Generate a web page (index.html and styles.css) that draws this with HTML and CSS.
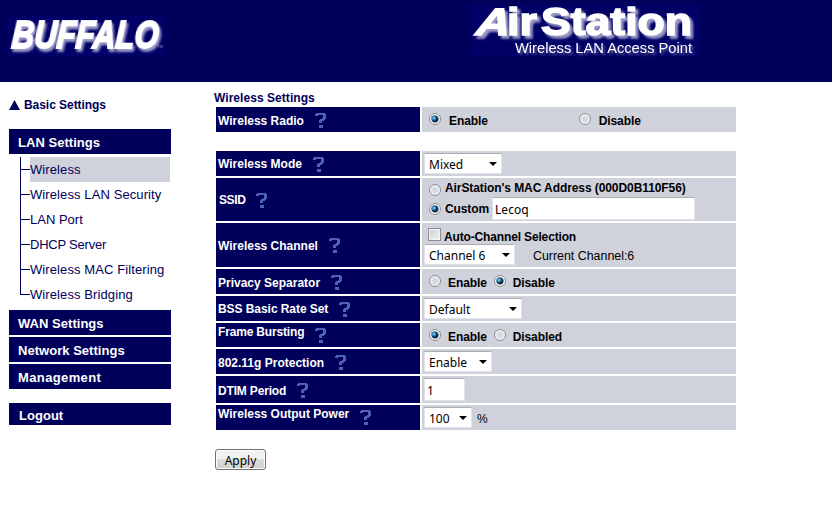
FILE: index.html
```html
<!DOCTYPE html>
<html lang="en">
<head>
<meta charset="utf-8">
<title>AirStation</title>
<link rel="stylesheet" href="styles.css">
</head>
<body>
<svg class="defs" width="0" height="0">
  <symbol id="help" viewBox="0 0 11 15"><path d="M1 0H10V1H11V6H10V7H9V8H7V10H4V7H5V6H7V5H8V2H3V3H0V1H1ZM4 12H8V15H4Z"/></symbol>
</svg>
<header class="header">
  <svg class="brand" width="158" height="42" viewBox="0 0 158 42">
    <rect width="158" height="42" fill="#006"/>
    <text class="brand-text" transform="translate(4 33) skewX(-4)" textLength="147" lengthAdjust="spacingAndGlyphs">BUFFALO</text>
    <text class="tm" x="150" y="33">TM</text>
  </svg>
  <svg class="product" width="230" height="57" viewBox="0 0 230 57">
    <rect width="230" height="52" y="5" fill="#006"/>
    <g class="product-text">
      <text transform="translate(3 35) skewX(-20)" textLength="34" lengthAdjust="spacingAndGlyphs">A</text>
      <text x="37" y="35" textLength="30" lengthAdjust="spacingAndGlyphs">ir</text>
      <text x="71" y="35" textLength="151" lengthAdjust="spacingAndGlyphs">Station</text>
    </g>
    <text class="tagline" x="45" y="53" textLength="177" lengthAdjust="spacingAndGlyphs">Wireless LAN Access Point</text>
  </svg>
</header>
<div class="page">
  <nav class="sidebar">
    <div class="basic"><svg width="11" height="10"><path d="M5.500 0L11 10H0Z"/></svg><span>Basic Settings</span></div>
    <div class="section">LAN Settings</div>
    <ul class="tree">
      <li><span class="current">Wireless</span></li>
      <li><span>Wireless LAN Security</span></li>
      <li><span class="tight">LAN Port</span></li>
      <li><span class="tighter">DHCP Server</span></li>
      <li><span>Wireless MAC Filtering</span></li>
      <li><span>Wireless Bridging</span></li>
    </ul>
    <div class="section">WAN Settings</div>
    <div class="section">Network Settings</div>
    <div class="section loose">Management</div>
    <div class="section logout">Logout</div>
  </nav>
  <main class="main">
    <h1>Wireless Settings</h1>
    <div class="row radio-row">
      <div class="label low"><span>Wireless Radio</span><svg class="help"><use href="#help"/></svg></div>
      <div class="cell"><i class="radio on"></i><b>Enable</b><i class="radio far"></i><b>Disable</b></div>
    </div>
    <div class="row">
      <div class="label"><span>Wireless Mode</span><svg class="help"><use href="#help"/></svg></div>
      <div class="cell"><div class="select mode">Mixed</div></div>
    </div>
    <div class="row ssid">
      <div class="label"><span>SSID</span><svg class="help"><use href="#help"/></svg></div>
      <div class="cell stack">
        <div class="line mac"><i class="radio"></i><b>AirStation's MAC Address (000D0B110F56)</b></div>
        <div class="line custom"><i class="radio on"></i><b>Custom</b><div class="input name">Lecoq</div></div>
      </div>
    </div>
    <div class="row channel">
      <div class="label"><span>Wireless Channel</span><svg class="help"><use href="#help"/></svg></div>
      <div class="cell stack">
        <div class="line auto"><i class="check"></i><b>Auto-Channel Selection</b></div>
        <div class="line"><div class="select chan">Channel 6</div><span class="now">Current Channel:6</span></div>
      </div>
    </div>
    <div class="row">
      <div class="label low"><span>Privacy Separator</span><svg class="help"><use href="#help"/></svg></div>
      <div class="cell pair"><i class="radio"></i><b>Enable</b><i class="radio on next"></i><b>Disable</b></div>
    </div>
    <div class="row">
      <div class="label"><span class="close">BSS Basic Rate Set</span><svg class="help"><use href="#help"/></svg></div>
      <div class="cell"><div class="select rate">Default</div></div>
    </div>
    <div class="row burst">
      <div class="label raised"><span class="closer">Frame Bursting</span><svg class="help"><use href="#help"/></svg></div>
      <div class="cell pair"><i class="radio on"></i><b>Enable</b><i class="radio next"></i><b>Disabled</b></div>
    </div>
    <div class="row">
      <div class="label low"><span>802.11g Protection</span><svg class="help"><use href="#help"/></svg></div>
      <div class="cell"><div class="select prot">Enable</div></div>
    </div>
    <div class="row dtim">
      <div class="label low"><span class="closer">DTIM Period</span><svg class="help"><use href="#help"/></svg></div>
      <div class="cell"><div class="input period">1</div></div>
    </div>
    <div class="row">
      <div class="label raised"><span>Wireless Output Power</span><svg class="help"><use href="#help"/></svg></div>
      <div class="cell"><div class="select power">100</div><span class="unit">%</span></div>
    </div>
    <button class="apply">Apply</button>
  </main>
</div>
</body>
</html>
```
FILE: styles.css
```css
* { box-sizing: border-box; }
body { margin: 0; height: 516px; overflow: hidden; background: #fff; color: #000; font: 12px/14px "Liberation Sans", sans-serif; }
.defs { display: block; height: 0; }
.header { height: 82px; background: #00005a; display: flex; align-items: flex-start; }
.brand { margin: 15px 0 0 7px; }
.brand-text { font: italic bold 38px "Liberation Sans", sans-serif; fill: #fff; stroke: #fff; stroke-width: 2px; filter: drop-shadow(2px 3px 1px #9a9ac8); }
.tm { font: 4px "Liberation Sans", sans-serif; fill: #88b; }
.product { margin-left: 305px; }
.product-text { font: bold 38px "Liberation Sans", sans-serif; fill: #fff; stroke: #fff; stroke-width: 1.5px; filter: drop-shadow(3px 3px 1px #9a9ac8); }
.tagline { font: 14.600px "Liberation Sans", sans-serif; fill: #fff; filter: drop-shadow(2px 2px 1px #5a5aa0); }
.page { display: flex; }
.sidebar { width: 162px; margin-left: 9px; color: #00005a; }
.basic { display: flex; align-items: center; gap: 4px; margin-top: 16px; height: 14px; font-weight: bold; letter-spacing: -.05px; }
.basic svg { fill: #00005a; }
.section { height: 25px; margin-bottom: 2px; padding: 2px 0 0 9px; background: #00005a; color: #fff; font: bold 13px/23px "Liberation Sans", sans-serif; letter-spacing: .03px; }
.basic + .section { margin-top: 17px; margin-bottom: 3px; }
.loose { letter-spacing: .38px; }
.logout { height: 22px; margin-top: 14px; padding: 1px 0 0 10px; }
.tree { list-style: none; margin: 0 0 3px 11px; padding: 0; font-size: 13px; letter-spacing: .1px; line-height: 25px; }
.tree li { display: flex; align-items: center; height: 25px; padding-right: 1px; background: linear-gradient(#00005a, #00005a) 0 0 / 1px 100% no-repeat; }
.tree li:last-child { background-size: 1px 13px; }
.tree li::before { content: ""; width: 10px; height: 1px; background: #00005a; }
.tree span { flex: 1; white-space: nowrap; }
.tree .tight { letter-spacing: 0; }
.tree .tighter { letter-spacing: -.22px; }
.current { background: #cfd1db; }
.main { margin-left: 43px; padding-left: 2px; width: 522px; }
h1 { margin: 9px 0 2px -2px; font-size: 12px; line-height: 14px; color: #00005a; letter-spacing: .05px; }
.row { display: flex; gap: 2px; height: 25px; margin-bottom: 2px; }
.radio-row { margin-bottom: 19px; }
.ssid { height: 43px; }
.channel { height: 44px; }
.burst { height: 24px; }
.dtim { height: 27px; }
.label { width: 204px; padding: 1px 0 0 2px; background: #00005a; color: #fff; font-weight: bold; display: flex; align-items: center; gap: 11px; }
.ssid .label { padding-left: 3px; letter-spacing: -.4px; }
.close { letter-spacing: -.06px; }
.closer { letter-spacing: -.17px; }
.low { padding-top: 2px; }
.raised { align-items: flex-start; padding-top: 2px; }
.raised .help { margin-top: 3px; }
.help { width: 11px; height: 15px; fill: #4d62b3; }
.cell { width: 314px; background: #cfd1db; display: flex; align-items: center; }
.cell b { padding-top: 2px; letter-spacing: -.1px; }
.radio { flex: none; width: 12px; height: 12px; margin: -2px 8px 0 7px; border: 1px solid #8c8e94; border-radius: 50%; background: radial-gradient(circle, #d5d8dd 0 2px, #f4f4f4 5px); }
.radio.on { background: radial-gradient(circle at 4px 4px, #8fd4ee 0, #217aa5 2px, transparent 3px), radial-gradient(circle at 5px 5px, #0b2c4c 3px, #f4f4f4 4px); }
.radio.far { margin-left: 91px; }
.pair .radio { margin-right: 7px; }
.pair .radio.next { margin-left: 7px; }
.burst .cell { padding-top: 1px; }
.stack { display: block; }
.line { display: flex; align-items: center; }
.mac { height: 19px; }
.mac .radio { margin: 5px 4px 0 7px; }
.cell.stack .mac b { padding: 0; letter-spacing: -.08px; }
.custom .radio { margin: 0 4px 0 7px; }
.custom { height: 24px; }
.cell .custom b { padding: 0; }
.auto { height: 21px; }
.cell .auto b { padding-top: 6px; letter-spacing: -.15px; }
.check { width: 13px; height: 13px; margin: 2px 3px 0 6px; border: 1px solid #8c8e94; outline: 1px solid #f4f4f4; outline-offset: -2px; background: linear-gradient(135deg, #ccd0d4, #f4f4f4); }
.select, .input { border: 1px solid #e2e3ea; border-top-color: #abadb3; background: #fff; font: 12px/21px "Noto Sans", sans-serif; height: 21px; padding-left: 4px; white-space: nowrap; }
.select { position: relative; margin-left: 2px; }
.select::after { content: ""; position: absolute; right: 4px; top: 8px; border: 4px solid transparent; border-top-color: #000; border-bottom: 0; }
.input { height: 23px; line-height: 23px; padding-left: 2px; }
.mode { width: 78px; }
.name { width: 203px; margin: -2px 0 0 3px; }
.chan { width: 91px; }
.rate { width: 98px; }
.prot { width: 68px; }
.period { width: 41px; margin-left: 2px; }
.power { width: 48px; }
.now { margin-left: 18px; padding-top: 2px; font-size: 12.400px; }
.unit { margin-left: 5px; padding-top: 2px; }
.apply { display: block; width: 51px; height: 21px; margin: 19px 0 0 -1px; padding: 2px 0 0; border: 1px solid #707070; border-radius: 3px; background: linear-gradient(#f2f2f2 50%, #ddd 50%, #cfcfcf); box-shadow: inset 0 0 0 1px #fcfcfc; font: 12px/16px "Noto Sans", sans-serif; }
```
